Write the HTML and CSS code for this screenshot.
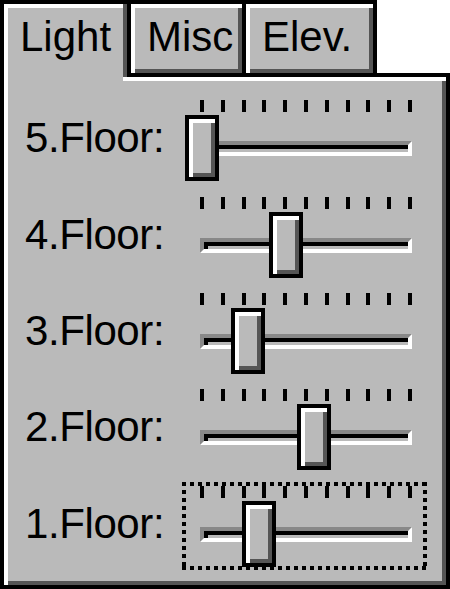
FILE: index.html
```html
<!DOCTYPE html>
<html lang="en">

<head>
  <meta charset="UTF-8">
  <meta name="viewport" content="width=device-width, initial-scale=1.0">
  <title>Light</title>
  <link rel="stylesheet" href="styles.css">
</head>

<body>
  <div class="window">
    <div class="tab-bar">
      <div class="tab tab-active">Light</div>
      <div class="tab tab-misc">Misc</div>
      <div class="tab tab-elev">Elev.</div>
    </div>

    <div class="pane">
      <div class="floor-row">
        <span class="floor-label">5.Floor:</span>
        <div class="slider">
          <div class="ticks"><i></i><i></i><i></i><i></i><i></i><i></i><i></i><i></i><i></i><i></i><i></i></div>
          <div class="track"></div>
          <div class="thumb" style="left: 3px"></div>
        </div>
      </div>

      <div class="floor-row">
        <span class="floor-label">4.Floor:</span>
        <div class="slider">
          <div class="ticks"><i></i><i></i><i></i><i></i><i></i><i></i><i></i><i></i><i></i><i></i><i></i></div>
          <div class="track"></div>
          <div class="thumb" style="left: 87px"></div>
        </div>
      </div>

      <div class="floor-row">
        <span class="floor-label">3.Floor:</span>
        <div class="slider">
          <div class="ticks"><i></i><i></i><i></i><i></i><i></i><i></i><i></i><i></i><i></i><i></i><i></i></div>
          <div class="track"></div>
          <div class="thumb" style="left: 49px"></div>
        </div>
      </div>

      <div class="floor-row">
        <span class="floor-label">2.Floor:</span>
        <div class="slider">
          <div class="ticks"><i></i><i></i><i></i><i></i><i></i><i></i><i></i><i></i><i></i><i></i><i></i></div>
          <div class="track"></div>
          <div class="thumb" style="left: 115px"></div>
        </div>
      </div>

      <div class="floor-row">
        <span class="floor-label">1.Floor:</span>
        <div class="slider focused">
          <div class="ticks"><i></i><i></i><i></i><i></i><i></i><i></i><i></i><i></i><i></i><i></i><i></i></div>
          <div class="track"></div>
          <div class="thumb" style="left: 60px"></div>
        </div>
      </div>
    </div>
  </div>
</body>

</html>
```

FILE: styles.css
```css
* {
  margin: 0;
  padding: 0;
  box-sizing: border-box;
  font-family: "Liberation Sans", Arial, sans-serif;
}

body {
  background: #ffffff;
  color: #000000;
}

.window {
  width: 450px;
  height: 589px;
  overflow: hidden;
}

/* Tabs */
.tab-bar {
  display: flex;
  align-items: flex-start;
  height: 77px;
  position: relative;
  z-index: 1;
}

.tab {
  height: 77px;
  padding: 9px 0 0 16px;
  font-size: 42px;
  line-height: 48px;
  background: #bababa;
  border: 4px solid #000;
  box-shadow: inset 4px 4px 0 #fff, inset -4px -4px 0 #555;
}

.tab-active {
  position: relative;
  width: 127px;
  height: 81px;
  border-right: none;
  border-bottom: none;
  box-shadow: inset 4px 4px 0 #fff;
}

.tab-active::after {
  content: "";
  position: absolute;
  right: 0;
  top: 0;
  bottom: 0;
  width: 4px;
  background: linear-gradient(#555 calc(100% - 4px), #fff 0);
}

.tab-misc {
  width: 119px;
}

.tab-elev {
  width: 135px;
  margin-left: -4px;
}

/* Pane */
.pane {
  height: 516px;
  margin-top: -4px;
  padding: 19.3px 0 0 21px;
  background: #bababa;
  border: 4px solid #000;
  box-shadow: inset 4px 4px 0 #fff, inset -4px -4px 0 #555;
  display: flex;
  flex-direction: column;
  gap: 8.35px;
}

.floor-row {
  display: flex;
  height: 88px;
}

.floor-label {
  width: 157px;
  flex: none;
  padding-top: 18px;
  font-size: 42px;
  line-height: 48px;
  letter-spacing: -0.4px;
}

/* Slider */
.slider {
  position: relative;
  width: 245px;
  height: 88px;
  padding: 4px 15px 0 18px;
}

.slider.focused {
  background:
    repeating-linear-gradient(90deg, #000 0 4px, transparent 4px 8px) left top / 100% 4px no-repeat,
    repeating-linear-gradient(90deg, #000 0 4px, transparent 4px 8px) left bottom / 100% 4px no-repeat,
    repeating-linear-gradient(180deg, #000 0 4px, transparent 4px 8px) left top / 4px 100% no-repeat,
    repeating-linear-gradient(180deg, #000 0 4px, transparent 4px 8px) right top / 4px 100% no-repeat;
}

.ticks {
  display: flex;
  justify-content: space-between;
  height: 12px;
}

.ticks i {
  width: 4px;
  height: 12px;
  background: #000;
}

.track {
  margin-top: 29px;
  height: 15px;
  border-top: 4px solid #888;
  border-left: 4px solid #888;
  border-bottom: 4px solid #fff;
  border-right: 4px solid #fff;
  box-shadow: inset 4px 4px 0 #000;
}

.thumb {
  position: absolute;
  top: 19px;
  width: 34px;
  height: 66px;
  background: #bababa;
  border: 4px solid #000;
  box-shadow: inset 4px 4px 0 #fff, inset -4px -4px 0 #555;
}
```
